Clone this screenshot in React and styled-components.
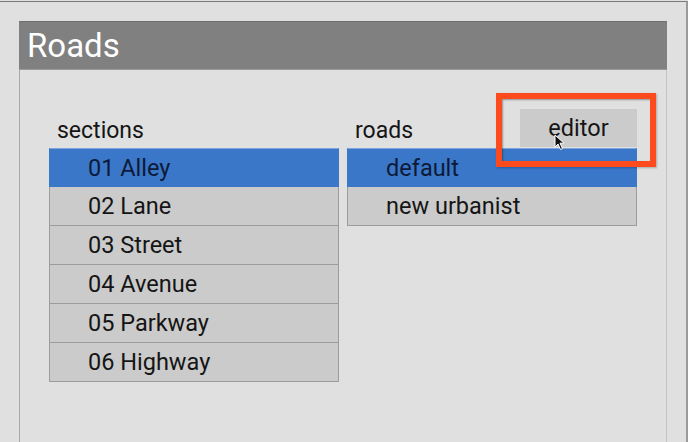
import styled, { createGlobalStyle } from "styled-components";

const GlobalStyle = createGlobalStyle`
  html, body {
    margin: 0;
    padding: 0;
    background: #e0e0e0;
    font-family: Roboto, "Liberation Sans", sans-serif;
    overflow: hidden;
  }
`;

const Screen = styled.div`
  box-sizing: border-box;
  width: 688px;
  height: 442px;
  margin-top: 1px;
  border-top: 1px solid #7a7a7a;
  border-right: 2px solid #9a9a9a;
  padding: 19px 0 0 19px;
`;

const Panel = styled.div`
  width: 648px;
  height: 430px;
  display: flex;
  flex-direction: column;
`;

const Header = styled.div`
  height: 49px;
  background: #808080;
  box-shadow: inset 0 1px 0 #6f6f6f, inset 0 -1px 0 #9a9a9a;
  color: #fff;
  font-size: 33px;
  line-height: 49px;
  padding-left: 8px;
`;

const Body = styled.div`
  flex: 1;
  border-left: 1px solid #a8a8a8;
  border-right: 1px solid #c4c4c4;
  padding: 39px 0 0 29px;
  display: flex;
  gap: 8px;
`;

const Column = styled.div`
  width: 290px;
  display: flex;
  flex-direction: column;
`;

const ColumnHead = styled.div`
  height: 39px;
  display: flex;
  align-items: flex-end;
  justify-content: space-between;
`;

const Label = styled.span`
  font-size: 23px;
  color: #151515;
  padding: 0 0 4px 8px;
`;

const EditorButton = styled.div`
  position: relative;
  width: 117px;
  height: 38px;
  background: #cbcbcb;
  color: #151515;
  font-size: 23.5px;
  display: flex;
  align-items: center;
  justify-content: center;
  margin-bottom: 1px;
`;

const Highlight = styled.div`
  position: absolute;
  left: -24px;
  top: -16px;
  right: -19px;
  bottom: -20px;
  border: 6px solid #fd4b1e;
  box-shadow: inset 1px 1px 2px rgba(0, 0, 0, 0.35), 1px 1px 2px rgba(0, 0, 0, 0.25);
  pointer-events: none;
`;

const Cursor = styled.svg`
  position: absolute;
  left: 34px;
  top: 25px;
`;

const List = styled.div`
  display: flex;
  flex-direction: column;
`;

const Item = styled.div`
  box-sizing: border-box;
  height: 39px;
  display: flex;
  align-items: center;
  padding-left: 38px;
  font-size: 23.5px;
  background: ${({ $active }) => ($active ? "#3a77c8" : "#cbcbcb")};
  color: ${({ $active }) => ($active ? "#0c1a38" : "#151515")};
  border: 1px solid ${({ $active }) => ($active ? "#3a77c8" : "#9c9c9c")};
  border-top-color: ${({ $active }) => ($active ? "#7ea6dc" : "#9c9c9c")};
  & + & {
    border-top: none;
  }
`;

const sections = ["01 Alley", "02 Lane", "03 Street", "04 Avenue", "05 Parkway", "06 Highway"];
const roads = ["default", "new urbanist"];

export default function App() {
  return (
    <>
      <GlobalStyle />
      <Screen>
        <Panel>
          <Header>Roads</Header>
          <Body>
            <Column>
              <ColumnHead>
                <Label>sections</Label>
              </ColumnHead>
              <List>
                {sections.map((s, i) => (
                  <Item key={s} $active={i === 0}>{s}</Item>
                ))}
              </List>
            </Column>
            <Column>
              <ColumnHead>
                <Label>roads</Label>
                <EditorButton>
                  editor
                  <Highlight />
                  <Cursor width="12" height="17" viewBox="0 0 12 17">
                    <path d="M1 1 L1 13 L4 10 L6.5 15.5 L8.5 14.6 L6 9.2 L10 9.2 Z" fill="#111" stroke="#fff" strokeWidth="1" />
                  </Cursor>
                </EditorButton>
              </ColumnHead>
              <List>
                {roads.map((r, i) => (
                  <Item key={r} $active={i === 0}>{r}</Item>
                ))}
              </List>
            </Column>
          </Body>
        </Panel>
      </Screen>
    </>
  );
}
